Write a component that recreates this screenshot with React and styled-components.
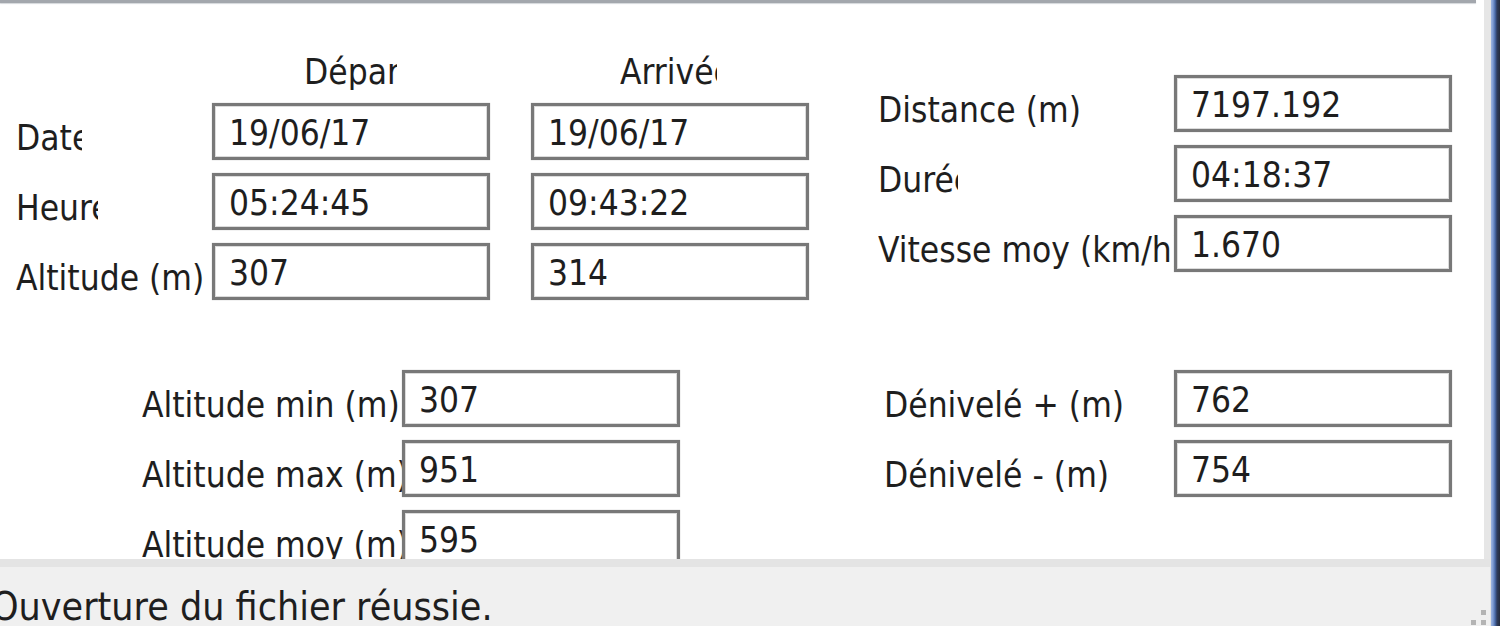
import React from "react";
import styled, { createGlobalStyle } from "styled-components";

const GlobalStyle = createGlobalStyle`
  html, body {
    margin: 0;
    padding: 0;
    width: 1500px;
    height: 626px;
    overflow: hidden;
    background: #ffffff;
  }
  body {
    font-family: "DejaVu Sans Condensed", "DejaVu Sans", sans-serif;
    font-stretch: condensed;
    color: #1e1e1e;
  }
`;

const Window = styled.div`
  display: flex;
  width: 1500px;
  height: 626px;
`;

const Main = styled.div`
  flex: 1;
  display: flex;
  flex-direction: column;
  min-width: 0;
`;

const Frame = styled.div`
  width: 10px;
  background: linear-gradient(
    to right,
    #e2e2e2 0px,
    #e2e2e2 1px,
    #9fb6e0 1px,
    #7d9ad0 3px,
    #4b6cab 5px,
    #2d3b5c 7px,
    #252b3b 10px
  );
`;

const Panel = styled.div`
  height: 559px;
  background: #ffffff;
  overflow: hidden;
  border-right: 6px solid #e6e6e6;
`;

const GroupEdge = styled.div`
  height: 3px;
  margin-right: 8px;
  background: #a3a7ad;
  box-shadow: 0 1px 1px #d4d7db;
`;

const Section = styled.div`
  display: flex;
  align-items: flex-start;
  gap: ${(p) => p.$gap}px;
  padding-left: ${(p) => p.$left}px;
  margin-top: ${(p) => p.$top}px;
`;

const DateGrid = styled.div`
  display: grid;
  grid-template-columns: 196px 278px 41px 278px;
  grid-template-rows: 36px repeat(3, 57px);
  row-gap: 13px;
`;

const FieldGrid = styled.div`
  display: grid;
  grid-template-columns: ${(p) => p.$label}px 278px;
  grid-auto-rows: 57px;
  row-gap: 13px;
  margin-top: ${(p) => p.$top || 0}px;
`;

const Header = styled.div`
  grid-column: ${(p) => p.$col};
  height: 36px;
  line-height: 36px;
  font-size: 35px;
  white-space: nowrap;
  overflow: hidden;
  margin-left: ${(p) => p.$offset}px;
  width: ${(p) => p.$clip}px;
`;

const Label = styled.div`
  grid-column: 1;
  box-sizing: border-box;
  height: 57px;
  font-size: 35px;
  line-height: 46px;
  padding-top: 12px;
  white-space: nowrap;
  overflow: hidden;
  width: ${(p) => (p.$clip ? `${p.$clip}px` : "auto")};
  min-width: 0;
`;

const Box = styled.div`
  grid-column: ${(p) => p.$col || "auto"};
  box-sizing: border-box;
  height: 57px;
  border: 3px solid #787878;
  box-shadow: inset 0 0 0 1px #dcdcdc, 0 0 1px #b0b0b0;
  background: #ffffff;
  font-size: 35px;
  line-height: 47px;
  padding: 4px 0 0 14px;
  white-space: nowrap;
  overflow: hidden;
`;

const StatusBar = styled.div`
  flex: 1;
  background: #f0f0f0;
  border-top: 8px solid #e4e4e4;
  position: relative;
  overflow: hidden;
`;

const StatusText = styled.div`
  font-size: 39px;
  line-height: 52px;
  padding-top: 14px;
  margin-left: -9px;
  white-space: nowrap;
`;

const Grip = styled.svg`
  position: absolute;
  right: 2px;
  bottom: 0;
`;

const Field = ({ label, clip, value }) => (
  <>
    <Label $clip={clip}>{label}</Label>
    <Box>{value}</Box>
  </>
);

const DateRow = ({ label, clip, start, end }) => (
  <>
    <Label $clip={clip}>{label}</Label>
    <Box $col={2}>{start}</Box>
    <Box $col={4}>{end}</Box>
  </>
);

export default function App() {
  return (
    <Window>
      <GlobalStyle />
      <Main>
        <Panel>
          <GroupEdge />
          <Section $left={16} $gap={69} $top={51}>
            <DateGrid>
              <Header $col={2} $offset={92} $clip={93}>
                Départ
              </Header>
              <Header $col={4} $offset={89} $clip={97}>
                Arrivée
              </Header>
              <DateRow label="Date" clip={66} start="19/06/17" end="19/06/17" />
              <DateRow label="Heure" clip={82} start="05:24:45" end="09:43:22" />
              <DateRow label="Altitude (m)" start="307" end="314" />
            </DateGrid>

            <FieldGrid $label={296} $top={21}>
              <Field label="Distance (m)" value="7197.192" />
              <Field label="Durée" clip={80} value="04:18:37" />
              <Field label="Vitesse moy (km/h)" value="1.670" />
            </FieldGrid>
          </Section>

          <Section $left={142} $gap={204} $top={70}>
            <FieldGrid $label={260}>
              <Field label="Altitude min (m)" value="307" />
              <Field label="Altitude max (m)" value="951" />
              <Field label="Altitude moy (m)" value="595" />
            </FieldGrid>
            <FieldGrid $label={290}>
              <Field label="Dénivelé + (m)" value="762" />
              <Field label="Dénivelé - (m)" value="754" />
            </FieldGrid>
          </Section>
        </Panel>
        <StatusBar>
          <StatusText>Ouverture du fichier réussie.</StatusText>
          <Grip width="20" height="18" viewBox="0 0 20 18">
            <rect x="13" y="2" width="5" height="5" fill="#b4b4b4" />
            <rect x="13" y="12" width="5" height="5" fill="#b4b4b4" />
            <rect x="3" y="12" width="5" height="5" fill="#b4b4b4" />
          </Grip>
        </StatusBar>
      </Main>
      <Frame />
    </Window>
  );
}
